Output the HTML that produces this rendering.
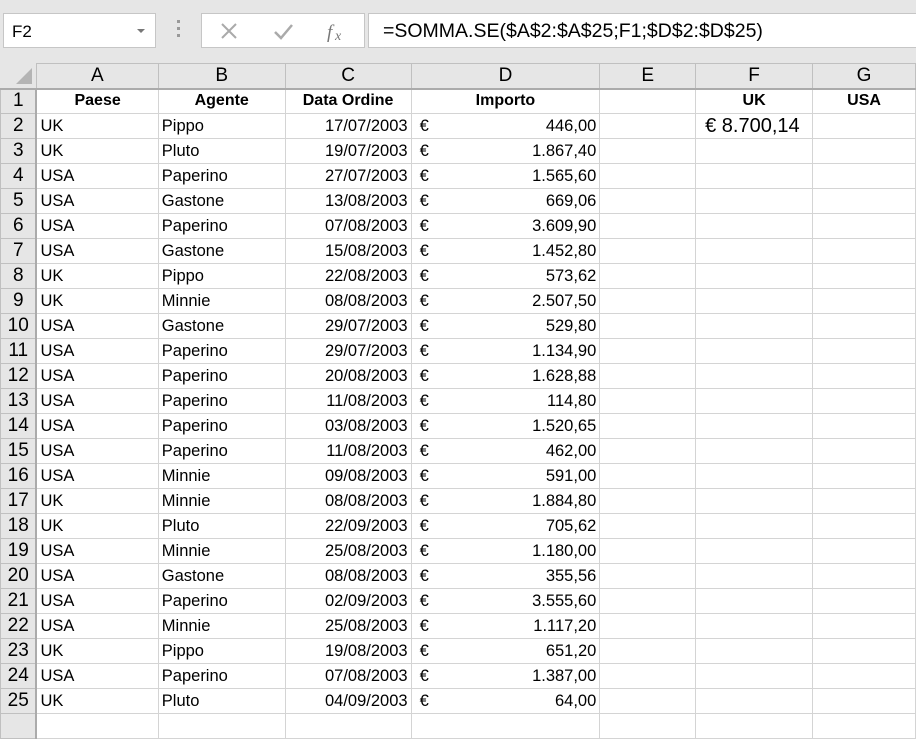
<!DOCTYPE html>
<html><head><meta charset="utf-8"><style>
body{margin:0;width:916px;height:718px;overflow:hidden;background:#fff;font-family:"Liberation Sans",Arial,sans-serif;position:relative}
.top{position:absolute;left:0;top:0;width:916px;height:63px;background:#e6e6e6}
.box{position:absolute;background:#fff;border:1px solid #c6c6c6;box-sizing:border-box}
table{position:absolute;left:0;top:63px;border-collapse:collapse;table-layout:fixed}
td{border:1px solid #d4d4d4;height:25px;padding:0 3px;font-size:16.5px;white-space:nowrap;overflow:hidden;box-sizing:border-box;color:#000}
tr.h td{background:#e6e6e6;text-align:center;font-size:19px;border-color:#c0c0c0;border-bottom:2px solid #ababab;height:25px}
td.r{background:#e6e6e6;text-align:center;font-size:19px;border-color:#c0c0c0;border-right:2px solid #ababab;padding:0}
.b{font-weight:bold;text-align:center;font-size:16px}
.n{text-align:right}
td.d{padding-left:8px}
</style></head><body>
<div class="top"></div>
<div class="box" style="left:3px;top:13px;width:153px;height:35px;font-size:17px;padding:8px 0 0 8px">F2<span style="position:absolute;right:10px;top:15px;border-left:4px solid transparent;border-right:4px solid transparent;border-top:4px solid #777"></span></div>
<div style="position:absolute;left:177px;top:20px;width:3px;height:20px;background:repeating-linear-gradient(#999 0 3px,transparent 3px 7px)"></div>
<div class="box" style="left:201px;top:13px;width:164px;height:35px">
<svg width="164" height="35" style="position:absolute;left:0;top:0"><path d="M20 10 L34 24 M34 10 L20 24" stroke="#aaa" stroke-width="2"/><path d="M73 18 L79 24 L90 11" stroke="#aaa" stroke-width="2.5" fill="none"/><text x="125" y="24" font-family="Liberation Serif" font-style="italic" font-size="19" fill="#777">f</text><text x="133" y="26" font-family="Liberation Serif" font-style="italic" font-size="14" fill="#777">x</text></svg></div>
<div class="box" style="left:368px;top:13px;width:560px;height:35px;font-size:19.5px;padding:6px 0 0 14px">=SOMMA.SE($A$2:$A$25;F1;$D$2:$D$25)</div>
<div style="position:absolute;left:0;top:63px;width:36px;height:25px;background:#e6e6e6;z-index:2"><div style="position:absolute;right:4px;bottom:4px;border-left:16px solid transparent;border-bottom:16px solid #b4b4b4"></div></div>
<table>
<colgroup><col style="width:36px"><col style="width:122px"><col style="width:127px"><col style="width:126px"><col style="width:189px"><col style="width:96px"><col style="width:117px"><col style="width:103px"></colgroup>
<tr class="h"><td></td><td>A</td><td>B</td><td>C</td><td>D</td><td>E</td><td>F</td><td>G</td></tr>
<tr><td class="r">1</td><td class="b">Paese</td><td class="b">Agente</td><td class="b">Data Ordine</td><td class="b">Importo</td><td></td><td class="b">UK</td><td class="b">USA</td></tr>
<tr><td class="r">2</td><td>UK</td><td>Pippo</td><td class="n">17/07/2003</td><td class="d">€<span style="float:right">446,00</span></td><td></td><td style="font-size:20px;padding-left:9px">€ 8.700,14</td><td></td></tr>
<tr><td class="r">3</td><td>UK</td><td>Pluto</td><td class="n">19/07/2003</td><td class="d">€<span style="float:right">1.867,40</span></td><td></td><td></td><td></td></tr>
<tr><td class="r">4</td><td>USA</td><td>Paperino</td><td class="n">27/07/2003</td><td class="d">€<span style="float:right">1.565,60</span></td><td></td><td></td><td></td></tr>
<tr><td class="r">5</td><td>USA</td><td>Gastone</td><td class="n">13/08/2003</td><td class="d">€<span style="float:right">669,06</span></td><td></td><td></td><td></td></tr>
<tr><td class="r">6</td><td>USA</td><td>Paperino</td><td class="n">07/08/2003</td><td class="d">€<span style="float:right">3.609,90</span></td><td></td><td></td><td></td></tr>
<tr><td class="r">7</td><td>USA</td><td>Gastone</td><td class="n">15/08/2003</td><td class="d">€<span style="float:right">1.452,80</span></td><td></td><td></td><td></td></tr>
<tr><td class="r">8</td><td>UK</td><td>Pippo</td><td class="n">22/08/2003</td><td class="d">€<span style="float:right">573,62</span></td><td></td><td></td><td></td></tr>
<tr><td class="r">9</td><td>UK</td><td>Minnie</td><td class="n">08/08/2003</td><td class="d">€<span style="float:right">2.507,50</span></td><td></td><td></td><td></td></tr>
<tr><td class="r">10</td><td>USA</td><td>Gastone</td><td class="n">29/07/2003</td><td class="d">€<span style="float:right">529,80</span></td><td></td><td></td><td></td></tr>
<tr><td class="r">11</td><td>USA</td><td>Paperino</td><td class="n">29/07/2003</td><td class="d">€<span style="float:right">1.134,90</span></td><td></td><td></td><td></td></tr>
<tr><td class="r">12</td><td>USA</td><td>Paperino</td><td class="n">20/08/2003</td><td class="d">€<span style="float:right">1.628,88</span></td><td></td><td></td><td></td></tr>
<tr><td class="r">13</td><td>USA</td><td>Paperino</td><td class="n">11/08/2003</td><td class="d">€<span style="float:right">114,80</span></td><td></td><td></td><td></td></tr>
<tr><td class="r">14</td><td>USA</td><td>Paperino</td><td class="n">03/08/2003</td><td class="d">€<span style="float:right">1.520,65</span></td><td></td><td></td><td></td></tr>
<tr><td class="r">15</td><td>USA</td><td>Paperino</td><td class="n">11/08/2003</td><td class="d">€<span style="float:right">462,00</span></td><td></td><td></td><td></td></tr>
<tr><td class="r">16</td><td>USA</td><td>Minnie</td><td class="n">09/08/2003</td><td class="d">€<span style="float:right">591,00</span></td><td></td><td></td><td></td></tr>
<tr><td class="r">17</td><td>UK</td><td>Minnie</td><td class="n">08/08/2003</td><td class="d">€<span style="float:right">1.884,80</span></td><td></td><td></td><td></td></tr>
<tr><td class="r">18</td><td>UK</td><td>Pluto</td><td class="n">22/09/2003</td><td class="d">€<span style="float:right">705,62</span></td><td></td><td></td><td></td></tr>
<tr><td class="r">19</td><td>USA</td><td>Minnie</td><td class="n">25/08/2003</td><td class="d">€<span style="float:right">1.180,00</span></td><td></td><td></td><td></td></tr>
<tr><td class="r">20</td><td>USA</td><td>Gastone</td><td class="n">08/08/2003</td><td class="d">€<span style="float:right">355,56</span></td><td></td><td></td><td></td></tr>
<tr><td class="r">21</td><td>USA</td><td>Paperino</td><td class="n">02/09/2003</td><td class="d">€<span style="float:right">3.555,60</span></td><td></td><td></td><td></td></tr>
<tr><td class="r">22</td><td>USA</td><td>Minnie</td><td class="n">25/08/2003</td><td class="d">€<span style="float:right">1.117,20</span></td><td></td><td></td><td></td></tr>
<tr><td class="r">23</td><td>UK</td><td>Pippo</td><td class="n">19/08/2003</td><td class="d">€<span style="float:right">651,20</span></td><td></td><td></td><td></td></tr>
<tr><td class="r">24</td><td>USA</td><td>Paperino</td><td class="n">07/08/2003</td><td class="d">€<span style="float:right">1.387,00</span></td><td></td><td></td><td></td></tr>
<tr><td class="r">25</td><td>UK</td><td>Pluto</td><td class="n">04/09/2003</td><td class="d">€<span style="float:right">64,00</span></td><td></td><td></td><td></td></tr>
<tr><td class="r"></td><td></td><td></td><td></td><td></td><td></td><td></td><td></td></tr>
</table>
</body></html>
